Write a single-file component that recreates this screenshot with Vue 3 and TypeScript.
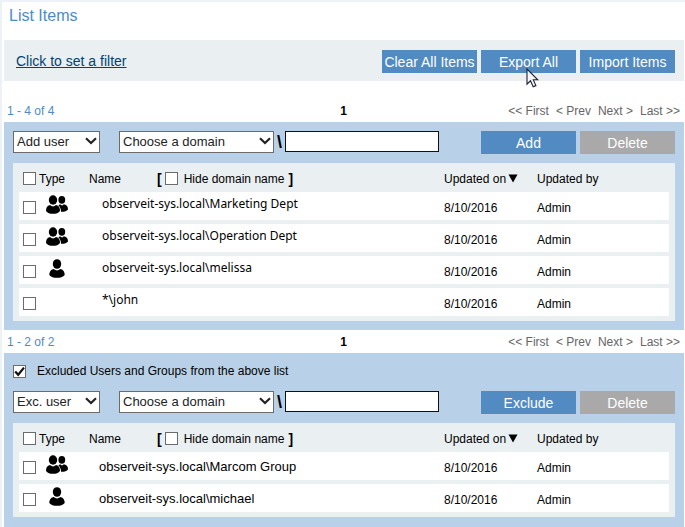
<script setup lang="ts">
import { ref } from 'vue'

interface Item {
  id: number
  kind: 'group' | 'user' | 'none'
  name: string
  updatedOn: string
  updatedBy: string
  checked: boolean
}

interface Section {
  key: string
  range: string
  exclusion: boolean
  kindOption: string
  addLabel: string
  all: boolean
  hideDomain: boolean
  account: string
  items: Item[]
}

const item = (id: number, kind: Item['kind'], name: string): Item => ({
  id,
  kind,
  name,
  updatedOn: '8/10/2016',
  updatedBy: 'Admin',
  checked: false,
})

const exclusionsOn = ref(true)
const pages = ['<< First', '< Prev', 'Next >', 'Last >>']

const sections = ref<Section[]>([
  {
    key: 'included',
    range: '1 - 4 of 4',
    exclusion: false,
    kindOption: 'Add user',
    addLabel: 'Add',
    all: false,
    hideDomain: false,
    account: '',
    items: [
      item(1, 'group', 'observeit-sys.local\\Marketing Dept'),
      item(2, 'group', 'observeit-sys.local\\Operation Dept'),
      item(3, 'user', 'observeit-sys.local\\melissa'),
      item(4, 'none', '*\\john'),
    ],
  },
  {
    key: 'excluded',
    range: '1 - 2 of 2',
    exclusion: true,
    kindOption: 'Exc. user',
    addLabel: 'Exclude',
    all: false,
    hideDomain: false,
    account: '',
    items: [
      item(5, 'group', 'observeit-sys.local\\Marcom Group'),
      item(6, 'user', 'observeit-sys.local\\michael'),
    ],
  },
])

function toggleAll(section: Section) {
  section.items.forEach((i) => (i.checked = section.all))
}
</script>

<template>
  <main class="page">
    <h1 class="title">List Items</h1>

    <div class="filter-bar">
      <a href="#" class="filter-link">Click to set a filter</a>
      <div class="actions">
        <button type="button" class="btn">Clear All Items</button>
        <div class="hovered">
          <button type="button" class="btn">Export All</button>
          <svg class="cursor" width="13" height="20" viewBox="0 0 13 20" aria-hidden="true">
            <path
              d="M1 1V16.2L4.5 12.8L7.2 18.8L9.9 17.6L7.3 11.8H11.8Z"
              fill="#f4f5f8"
              stroke="#1c2238"
              stroke-width="1.1"
            />
          </svg>
        </div>
        <button type="button" class="btn">Import Items</button>
      </div>
    </div>

    <section v-for="s in sections" :key="s.key" class="section">
      <nav class="pager">
        <span class="range">{{ s.range }}</span>
        <strong>1</strong>
        <span class="page-links">
          <a v-for="p in pages" :key="p" href="#">{{ p }}</a>
        </span>
      </nav>

      <div class="panel">
        <label v-if="s.exclusion" class="exclusion">
          <span class="tick">
            <input v-model="exclusionsOn" type="checkbox" />
            <svg v-if="exclusionsOn" width="13" height="13" viewBox="0 0 13 13" aria-hidden="true">
              <path d="M2.2 6.4L5.2 9.8L11 2.6" fill="none" stroke="#111" stroke-width="2.2" />
            </svg>
          </span>
          Excluded Users and Groups from the above list
        </label>

        <form class="controls" @submit.prevent>
          <span class="dropdown kind">
            <select aria-label="Account type">
              <option>{{ s.kindOption }}</option>
            </select>
            <svg width="12" height="8" viewBox="0 0 12 8" aria-hidden="true">
              <path d="M1 1.2L6 6L11 1.2" fill="none" stroke="#222" stroke-width="2.2" />
            </svg>
          </span>
          <span class="dropdown domain">
            <select aria-label="Domain">
              <option>Choose a domain</option>
            </select>
            <svg width="12" height="8" viewBox="0 0 12 8" aria-hidden="true">
              <path d="M1 1.2L6 6L11 1.2" fill="none" stroke="#222" stroke-width="2.2" />
            </svg>
          </span>
          <b class="slash">\</b>
          <input v-model="s.account" class="account" type="text" aria-label="Account name" />
          <div class="actions">
            <button type="submit" class="btn">{{ s.addLabel }}</button>
            <button type="button" class="btn muted">Delete</button>
          </div>
        </form>

        <div class="list">
          <table>
            <colgroup>
              <col class="col-check" />
              <col class="col-type" />
              <col />
              <col class="col-on" />
              <col class="col-by" />
            </colgroup>
            <thead>
              <tr>
                <th class="check">
                  <input v-model="s.all" type="checkbox" aria-label="Select all" @change="toggleAll(s)" />
                </th>
                <th>Type</th>
                <th>
                  <div class="name-head">
                    <span class="name-label">Name</span>
                    <b>[</b>
                    <label class="hide">
                      <input v-model="s.hideDomain" type="checkbox" />
                      Hide domain name
                    </label>
                    <b>]</b>
                  </div>
                </th>
                <th>
                  <span class="sorted">
                    Updated on
                    <svg width="10" height="9" viewBox="0 0 10 9" aria-hidden="true">
                      <path d="M0.5 0.5H9.5L5 8.5Z" fill="#000" />
                    </svg>
                  </span>
                </th>
                <th>Updated by</th>
              </tr>
            </thead>
            <tbody>
              <tr v-for="i in s.items" :key="i.id">
                <td class="check">
                  <input v-model="i.checked" type="checkbox" :aria-label="i.name" />
                </td>
                <td class="type">
                  <svg v-if="i.kind === 'group'" width="23" height="19" viewBox="0 0 23 19" role="img" aria-label="Group">
                    <ellipse cx="15.8" cy="4.8" rx="3.4" ry="3.9" />
                    <path d="M12.4 10.4L14 9.2L16 10.6L18 9.2C20.9 9.8 22 11.6 22 14.4C20.8 16.2 18 17 15 16.8C15 14.4 14.4 12 12.4 10.4Z" />
                    <ellipse cx="7" cy="5" rx="4.2" ry="4.700" />
                    <path d="M4 10Q7 12.800 10 10C13 10.600 14 12.800 14 16C12.600 18.200 10 18.800 7 18.800S1.400 18.200 0 16C0 12.800 1 10.600 4 10Z" />
                  </svg>
                  <svg v-else-if="i.kind === 'user'" width="23" height="19" viewBox="0 0 23 19" role="img" aria-label="User">
                    <ellipse cx="11" cy="5" rx="4.2" ry="4.800" />
                    <path d="M7.600 10Q11 12.800 14.400 10C17.600 10.800 18.700 13 18.700 16C17.200 18.200 14.200 18.800 11 18.800S4.800 18.200 3.300 16C3.300 13 4.400 10.800 7.600 10Z" />
                  </svg>
                </td>
                <td class="name" :class="s.key">{{ i.name }}</td>
                <td>{{ i.updatedOn }}</td>
                <td>{{ i.updatedBy }}</td>
              </tr>
            </tbody>
          </table>
        </div>
      </div>
    </section>
  </main>
</template>

<style>
body {
  margin: 0;
  background: #fff;
}
</style>

<style scoped>
.page {
  display: flex;
  flex-direction: column;
  box-sizing: border-box;
  min-height: 100vh;
  padding: 0 1px 0 2px;
  border-top: 2px solid #edf2f8;
  border-left: 2px solid #edf2f8;
  font: 12px/16px "Liberation Sans", Arial, sans-serif;
  color: #000;
}

.section {
  display: flex;
  flex-direction: column;
}

.section:last-child,
.section:last-child .panel {
  flex: 1;
}

.title {
  margin: 0;
  padding: 4px 5px 14px;
  font-size: 16px;
  font-weight: 400;
  line-height: 20px;
  color: #4f8bc2;
}

.filter-bar {
  display: flex;
  align-items: center;
  justify-content: space-between;
  box-sizing: border-box;
  height: 41px;
  margin-bottom: 18px;
  padding: 0 9px 0 12px;
  background: #eaeff2;
}

.filter-link {
  font-size: 14px;
  color: #00436f;
}

.actions {
  display: flex;
  gap: 4px;
}

.filter-bar .actions {
  padding-top: 2px;
}

.btn {
  display: block;
  width: 95px;
  height: 23px;
  padding: 0;
  border: 0;
  background: #528bc1;
  color: #fff;
  font: inherit;
  font-size: 14px;
  white-space: nowrap;
}

.btn.muted {
  background: #a9a9a9;
}

.hovered {
  position: relative;
}

.cursor {
  position: absolute;
  top: 18px;
  left: 45px;
}

.pager {
  display: grid;
  grid-template-columns: 1fr auto 1fr;
  align-items: center;
  height: 23px;
  padding: 0 4px 0 3px;
}

.range {
  color: #4f8bc2;
}

.page-links {
  display: flex;
  justify-content: flex-end;
  gap: 7px;
}

.page-links a {
  color: #666;
  text-decoration: none;
}

.panel {
  padding: 9px;
  background: #b9d1e8;
}

.exclusion {
  display: flex;
  align-items: center;
  gap: 11px;
  height: 18px;
  margin-bottom: 11px;
}

.tick {
  position: relative;
  display: flex;
}

.tick svg {
  position: absolute;
  inset: 0;
  pointer-events: none;
}

input[type="checkbox"] {
  appearance: none;
  box-sizing: border-box;
  flex: none;
  width: 13px;
  height: 13px;
  margin: 0;
  border: 1px solid #6b6b6b;
  background: #fff;
}

.controls {
  display: flex;
  align-items: flex-start;
  margin-bottom: 9px;
}

.dropdown {
  position: relative;
  flex: none;
}

.dropdown svg {
  position: absolute;
  top: 6px;
  right: 3px;
  pointer-events: none;
}

.dropdown select {
  appearance: none;
  display: block;
  width: 100%;
  height: 22px;
  padding: 0 3px;
  border: 1px solid #6b6b6b;
  border-radius: 0;
  background: #fff;
  color: #222;
  font: inherit;
  font-size: 13px;
}

.kind {
  width: 87px;
  margin-right: 19px;
}

.domain {
  width: 155px;
}

.slash {
  width: 11px;
  font-size: 18px;
  line-height: 22px;
  text-align: center;
}

.account {
  box-sizing: border-box;
  flex: 1;
  min-width: 60px;
  height: 21px;
  margin: 0 42px 0 0;
  padding: 0 4px;
  border: 1px solid #111;
  background: #fff;
  font: inherit;
  font-size: 13px;
}

.list {
  padding: 0 6px 1px;
  background: #eaeff2;
}

table {
  width: 100%;
  table-layout: fixed;
  border-spacing: 0 4px;
}

.col-check {
  width: 20px;
}

.col-type {
  width: 50px;
}

.col-on {
  width: 93px;
}

.col-by {
  width: 132px;
}

th {
  height: 21px;
  padding: 2px 0 0;
  box-sizing: border-box;
  font-weight: 400;
  text-align: left;
}

td {
  box-sizing: border-box;
  height: 28px;
  padding: 3px 0 0;
  background: #fff;
}

.check input {
  display: block;
  margin-left: 4px;
}

.type {
  padding: 0 0 4px 7px;
}

.type svg {
  display: block;
}

.name {
  padding: 0 0 4px 13px;
  font-family: "Noto Sans", "Open Sans", sans-serif;
  font-size: 12px;
}

.name.excluded {
  padding: 2px 0 0 10px;
  font-family: "Liberation Sans", Arial, sans-serif;
  font-size: 13px;
}

.name-head,
.hide,
.sorted {
  display: flex;
  align-items: center;
}

.name-head b {
  font-size: 14px;
}

.name-label {
  width: 68px;
}

.hide {
  gap: 6px;
  margin: 0 4px 0 3px;
}

.sorted {
  gap: 2px;
}
</style>
